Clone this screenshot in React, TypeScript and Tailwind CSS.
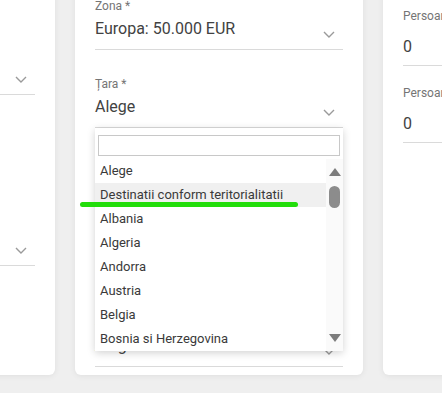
const font = { fontFamily: "Roboto, 'Noto Sans', Arial, sans-serif" };

const COUNTRIES = [
  "Alege",
  "Destinatii conform teritorialitatii",
  "Albania",
  "Algeria",
  "Andorra",
  "Austria",
  "Belgia",
  "Bosnia si Herzegovina",
];

// ===============================Icons==============================
const Chevron = () => (
  <svg width="12" height="7" viewBox="0 0 12 7" className="mt-[12px] mr-2 shrink-0">
    <polyline points="1,1 6,6 11,1" fill="none" stroke="#9a9a9a" strokeWidth="1.4" />
  </svg>
);

// ===============================Fields==============================
const SelectField = ({ label, value, className = "" }: { label: string; value: string; className?: string }) => (
  <div className={className}>
    <div className="text-[12px] leading-4 text-[#757575]">{label}</div>
    <div className="flex items-start justify-between pt-[5px] pb-[10px] border-b border-[#dadada]">
      <span className="text-[16px] leading-5 text-[#424242] whitespace-nowrap">{value}</span>
      <Chevron />
    </div>
  </div>
);

const InputField = ({ label, value, className = "" }: { label: string; value: string; className?: string }) => (
  <div className={className}>
    <div className="text-[12px] leading-4 text-[#757575] whitespace-nowrap">{label}</div>
    <div className="pt-[11px] pb-[6px] border-b border-[#dadada]">
      <span className="text-[16px] leading-5 text-[#424242]">{value}</span>
    </div>
  </div>
);

// ===============================Dropdown==============================
const CountryDropdown = () => (
  <div className="absolute left-0 right-0 top-full z-10 bg-white shadow-[0_2px_8px_rgba(0,0,0,0.18)]">
    <div className="px-[3px] pt-[7px] pb-[3px]">
      <div className="h-[21px] border border-[#c8c8c8] bg-white" />
    </div>
    <div className="flex">
      <ul className="flex-1">
        {COUNTRIES.map((c, i) => (
          <li
            key={c}
            className={`h-6 flex items-center pl-[5px] text-[13px] text-[#3a3a3a] whitespace-nowrap ${
              i === 1 ? "bg-[#f0f0f0]" : ""
            }`}
          >
            {c}
          </li>
        ))}
      </ul>
      <div className="w-[17px] bg-[#fafafa] flex flex-col items-center pt-[9px]">
        <svg width="12" height="8" viewBox="0 0 12 8">
          <polygon points="6,0 12,8 0,8" fill="#7d7d7d" />
        </svg>
        <div className="mt-[10px] w-[11px] h-[22px] rounded-full bg-[#8c8c8c]" />
        <div className="flex-1" />
        <svg width="12" height="8" viewBox="0 0 12 8" className="mb-[9px]">
          <polygon points="0,0 12,0 6,8" fill="#7d7d7d" />
        </svg>
      </div>
    </div>
  </div>
);

// ===============================Component==============================
export default function App() {
  return (
    <div className="min-h-screen bg-[#efefef] overflow-hidden relative" style={font}>
      <div className="flex gap-5 -mt-6 pb-[18px]">
        {/* ===============================Left Card============================== */}
        <div className="w-[300px] -ml-[245px] shrink-0 bg-white rounded-md shadow-[0_1px_6px_rgba(0,0,0,0.07)] px-5 pt-[67px]">
          <SelectField label="Durata *" value="1 zi" />
          <SelectField label="Tip *" value="Alege" className="mt-[119px]" />
        </div>

        {/* ===============================Middle Card============================== */}
        <div className="w-[288px] shrink-0 bg-white rounded-md shadow-[0_1px_6px_rgba(0,0,0,0.07)] px-5 pt-[22px] pb-2">
          <SelectField label="Zona *" value="Europa: 50.000 EUR" />
          <div className="relative mt-[26px]">
            <SelectField label="Țara *" value="Alege" />
            <CountryDropdown />
          </div>
          <SelectField label="Scop *" value="Alege" className="mt-[187px]" />
        </div>

        {/* ===============================Right Card============================== */}
        <div className="w-[288px] shrink-0 bg-white rounded-md shadow-[0_1px_6px_rgba(0,0,0,0.07)] px-5 pt-[32px]">
          <InputField label="Persoane 0-17 ani" value="0" />
          <InputField label="Persoane 18-65 ani" value="0" className="mt-[19px]" />
        </div>
      </div>

      {/* ===============================Annotation============================== */}
      <div className="absolute z-20 left-[80px] top-[202px] w-[218px] h-[5px] rounded-full bg-[#22dd0a]" />
    </div>
  );
}
